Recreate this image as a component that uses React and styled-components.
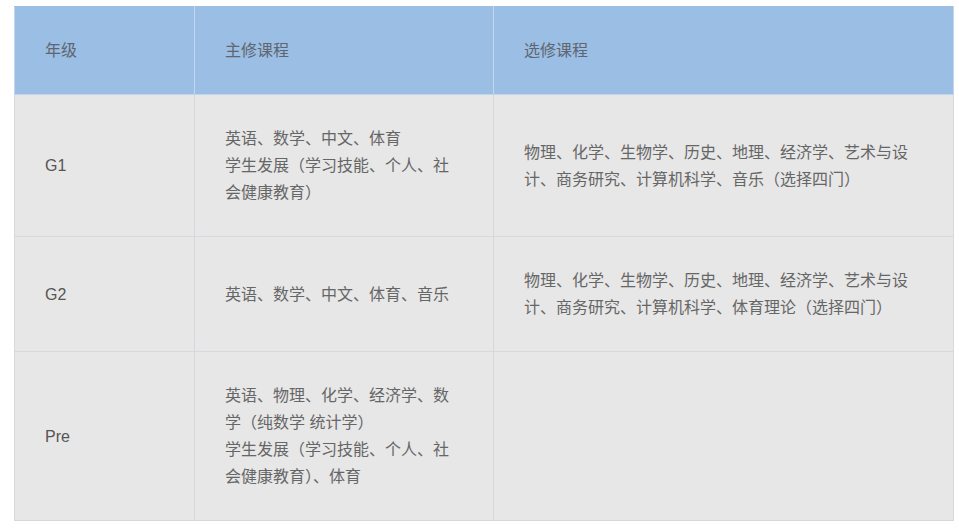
import styled, { createGlobalStyle } from 'styled-components'

const GlobalStyle = createGlobalStyle`
  body {
    margin: 0;
    background: #fff;
    font-family: "Liberation Sans", "Noto Sans CJK SC", sans-serif;
  }
`

const Page = styled.div`
  padding: 6px 0 0 14px;
`

const Table = styled.table`
  width: 939px;
  border-collapse: collapse;
  table-layout: fixed;
  font-size: 16px;
  line-height: 27px;
  color: #666;
`

const HeadCell = styled.th`
  background: #9bbee4;
  border: 1px solid #c3d6ec;
  border-top-color: #9bbee4;
  padding: 30px 30px;
  text-align: left;
  font-weight: normal;
  color: #5f6670;
`

const Cell = styled.td`
  background: #e7e7e7;
  border: 1px solid #d5d8dd;
  padding: 30px 30px;
  vertical-align: middle;
  color: ${p => (p.$label ? '#555' : '#666')};
`

const Line = styled.div``

const rows = [
  {
    grade: 'G1',
    major: ['英语、数学、中文、体育', '学生发展（学习技能、个人、社会健康教育）'],
    elective: '物理、化学、生物学、历史、地理、经济学、艺术与设计、商务研究、计算机科学、音乐（选择四门）'
  },
  {
    grade: 'G2',
    major: ['英语、数学、中文、体育、音乐'],
    elective: '物理、化学、生物学、历史、地理、经济学、艺术与设计、商务研究、计算机科学、体育理论（选择四门）'
  },
  {
    grade: 'Pre',
    major: ['英语、物理、化学、经济学、数学（纯数学 统计学）', '学生发展（学习技能、个人、社会健康教育）、体育'],
    elective: ''
  }
]

function App() {
  return (
    <Page>
      <GlobalStyle />
      <Table>
        <colgroup>
          <col style={{ width: 180 }} />
          <col style={{ width: 299 }} />
          <col style={{ width: 460 }} />
        </colgroup>
        <thead>
          <tr>
            <HeadCell>年级</HeadCell>
            <HeadCell>主修课程</HeadCell>
            <HeadCell>选修课程</HeadCell>
          </tr>
        </thead>
        <tbody>
          {rows.map(row => (
            <tr key={row.grade}>
              <Cell $label>{row.grade}</Cell>
              <Cell>
                {row.major.map(text => (
                  <Line key={text}>{text}</Line>
                ))}
              </Cell>
              <Cell>{row.elective}</Cell>
            </tr>
          ))}
        </tbody>
      </Table>
    </Page>
  )
}

export default App
